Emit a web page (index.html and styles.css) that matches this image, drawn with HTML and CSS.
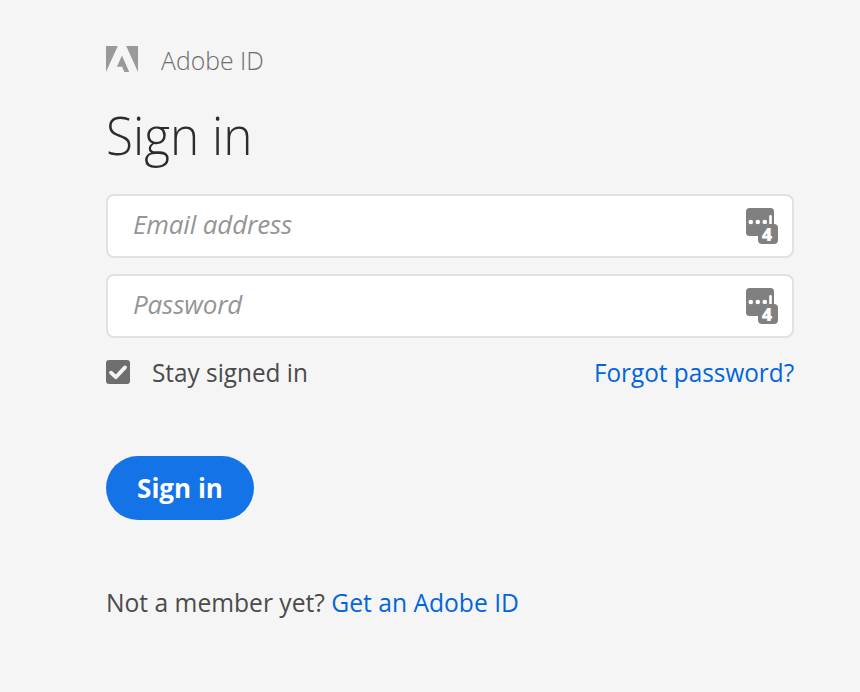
FILE: index.html
```html
<!DOCTYPE html>
<html lang="en">
<head>
<meta charset="utf-8">
<title>Sign in</title>
<link rel="stylesheet" href="styles.css">
</head>
<body>
<main class="signin">
  <header class="brand">
    <svg class="logo" width="32" height="26" viewBox="0 0 32 26"><path d="M0 0H11.8L0 26ZM20.2 0H32V26ZM16 9.6L23.2 26H18.3L16.2 20.8H10.9Z"/></svg>
    <span class="brand-name">Adobe ID</span>
  </header>
  <h1 class="title">Sign in</h1>
  <form class="form">
    <div class="field">
      <span class="placeholder">Email address</span>
      <svg class="manager" width="32" height="36" viewBox="0 0 32 36"><rect width="28" height="28" rx="3.5"/><g class="mark"><circle cx="4.8" cy="14" r="2.3"/><circle cx="11.8" cy="14" r="2.3"/><circle cx="18.8" cy="14" r="2.3"/><rect x="23.2" y="7" width="2.6" height="12" rx="1.2"/></g><rect x="12" y="16" width="20" height="20" rx="4"/><text class="count" x="21" y="33" text-anchor="middle">4</text></svg>
    </div>
    <div class="field">
      <span class="placeholder">Password</span>
      <svg class="manager" width="32" height="36" viewBox="0 0 32 36"><rect width="28" height="28" rx="3.5"/><g class="mark"><circle cx="4.8" cy="14" r="2.3"/><circle cx="11.8" cy="14" r="2.3"/><circle cx="18.8" cy="14" r="2.3"/><rect x="23.2" y="7" width="2.6" height="12" rx="1.2"/></g><rect x="12" y="16" width="20" height="20" rx="4"/><text class="count" x="21" y="33" text-anchor="middle">4</text></svg>
    </div>
    <div class="options">
      <label class="stay">
        <svg class="check" width="24" height="24" viewBox="0 0 24 24"><rect width="24" height="24" rx="3"/><path d="M5 12.7L9.8 17.2L19 7.4"/></svg>
        <span class="stay-text">Stay signed in</span>
      </label>
      <a class="link forgot">Forgot password?</a>
    </div>
    <button class="submit" type="button">Sign in</button>
  </form>
  <p class="signup">Not a member yet? <a class="link">Get an Adobe ID</a></p>
</main>
</body>
</html>
```
FILE: styles.css
```css
* { box-sizing: border-box; }
body {
  margin: 0;
  background: #f5f5f5;
  color: #4b4b4b;
  font: 26px/36px "Open Sans", sans-serif;
  font-stretch: 88%;
}
.signin { width: 688px; margin-left: 106px; padding-top: 42px; }
.brand { display: flex; height: 36px; }
.logo { margin: 4px 23px 0 0; fill: #999; }
.brand-name, .title, .stay-text, .signup { transform-origin: left; }
.brand-name { font-weight: 300; color: #6e6e6e; white-space: nowrap; transform: scaleX(.953); }
.title {
  margin: 19px 0 0;
  height: 76px;
  font-size: 53px;
  line-height: 76px;
  font-weight: 300;
  color: #2c2c2c;
  transform: scaleX(.935);
}
.form { margin-top: 21px; }
.field {
  display: flex;
  justify-content: space-between;
  height: 64px;
  margin-bottom: 16px;
  padding: 12px 14px 0 25px;
  background: #fff;
  border: 2px solid #e1e1e1;
  border-radius: 8px;
}
.placeholder { line-height: 32px; font-style: italic; color: #959595; letter-spacing: -.15px; }
.manager { fill: #808080; overflow: visible; }
.mark, .count { fill: #fff; }
.count { font: 800 18px/18px "Open Sans", sans-serif; }
.options { display: flex; justify-content: space-between; height: 36px; }
.stay { display: flex; }
.check { margin: 6px 22px 0 0; fill: #6e6e6e; }
.check path { fill: none; stroke: #f5f5f5; stroke-width: 3.8; stroke-linecap: round; stroke-linejoin: round; }
.stay-text { transform: scaleX(.936); }
.link { color: #0265dc; }
.forgot { transform: scaleX(.935); transform-origin: right; }
.submit {
  display: flex;
  align-items: center;
  justify-content: center;
  width: 148px;
  height: 64px;
  margin-top: 66px;
  padding: 0;
  border: 0;
  border-radius: 32px;
  background: #1473e6;
  color: #fff;
  font: inherit;
  font-weight: 700;
}
.signup { margin: 64px 0 0; transform: scaleX(.947); }
```
